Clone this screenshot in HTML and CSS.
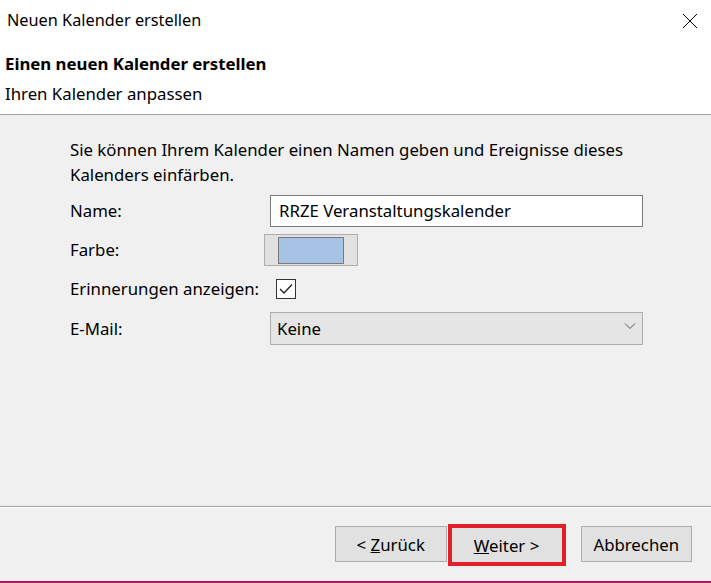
FILE: index.html
```html
<!DOCTYPE html>
<html lang="de">
<head>
<meta charset="utf-8">
<link rel="stylesheet" href="styles.css">
</head>
<body>
<div class="dialog">
  <div class="titlebar">
    <span class="title">Neuen Kalender erstellen</span>
    <svg class="close" width="16" height="16" viewBox="0 0 16 16"><path d="M1 1 L15 15 M15 1 L1 15" stroke="#000" stroke-width="1" fill="none"/></svg>
  </div>
  <div class="header">
    <div class="h-title">Einen neuen Kalender erstellen</div>
    <div class="h-sub">Ihren Kalender anpassen</div>
  </div>
  <div class="body">
    <p class="intro">Sie können Ihrem Kalender einen Namen geben und Ereignisse dieses Kalenders einfärben.</p>
    <div class="form">
      <label class="lbl">Name:</label>
      <div class="input">RRZE Veranstaltungskalender</div>
      <label class="lbl">Farbe:</label>
      <div class="colorbtn"><span class="swatch"></span></div>
      <label class="lbl">Erinnerungen anzeigen:</label>
      <div class="checkbox"><svg width="14" height="12" viewBox="0 0 14 12"><path d="M1 6 L5 10 L13 1.5" stroke="#222" stroke-width="1.3" fill="none"/></svg></div>
      <label class="lbl">E-Mail:</label>
      <div class="select"><span>Keine</span><svg width="12" height="8" viewBox="0 0 12 8"><path d="M1 1.5 L6 6.5 L11 1.5" stroke="#555" stroke-width="1" fill="none"/></svg></div>
    </div>
  </div>
  <div class="footer">
    <button class="btn">&lt; <u>Z</u>urück</button>
    <span class="highlight"><button class="btn"><u>W</u>eiter &gt;</button></span>
    <button class="btn cancel">Abbrechen</button>
  </div>
</div>
</body>
</html>
```
FILE: styles.css
```css
html, body { margin: 0; padding: 0; }
body {
  width: 711px;
  height: 583px;
  overflow: hidden;
  font-family: "Segoe UI", "Noto Sans", "Open Sans", sans-serif;
  font-size: 16.8px;
  color: #000;
  background: #f0f0f0;
}
.dialog {
  display: flex;
  flex-direction: column;
  height: 583px;
  box-sizing: border-box;
  border-bottom: 2px solid #b0175e;
}
.titlebar {
  background: #fff;
  height: 42px;
  display: flex;
  align-items: center;
  justify-content: space-between;
  padding: 0 13px 0 7px;
}
.title { font-size: 16.3px; position: relative; top: -1px; }
.close { display: block; }
.header {
  background: #fff;
  height: 73px;
  padding: 10px 5px 0;
  box-sizing: border-box;
  border-bottom: 1px solid #a0a0a0;
}
.h-title { font-weight: bold; line-height: 24px; }
.h-sub { line-height: 24px; margin-top: 6px; }
.body {
  flex: 1;
  padding: 22px 0 0 70px;
  box-sizing: border-box;
  border-bottom: 1px solid #a0a0a0;
  box-shadow: 0 1px 0 #fff;
}
.intro { margin: 0; line-height: 25px; width: 580px; }
.form {
  display: grid;
  grid-template-columns: 200px 373px;
  grid-template-rows: 32px 32px 32px 33px;
  row-gap: 7px;
  margin-top: 8px;
  align-items: center;
}
.lbl { line-height: 24px; }
.input {
  height: 32px;
  box-sizing: border-box;
  border: 1px solid #7a7a7a;
  background: #fff;
  padding: 0 8px;
  line-height: 30px;
  width: 373px;
}
.colorbtn {
  margin-left: -6px;
  width: 94px;
  height: 32px;
  box-sizing: border-box;
  background: #e1e1e1;
  border: 1px solid #adadad;
  display: flex;
  justify-content: center;
  align-items: center;
}
.swatch {
  width: 66px;
  height: 27px;
  box-sizing: border-box;
  background: #a6c2e4;
  border: 1px solid #7a7a7a;
}
.checkbox {
  margin-left: 6px;
  width: 20px;
  height: 20px;
  box-sizing: border-box;
  border: 1px solid #333;
  background: #fff;
  display: flex;
  align-items: center;
  justify-content: center;
}
.checkbox svg { display: block; }
.select {
  height: 33px;
  box-sizing: border-box;
  border: 1px solid #adadad;
  background: #e5e5e5;
  display: flex;
  align-items: center;
  justify-content: space-between;
  padding: 0 6px 0 6px;
  width: 373px;
}
.select svg { display: block; margin-top: -6px; }
.footer {
  height: 74px;
  box-sizing: border-box;
  display: flex;
  align-items: flex-start;
  padding: 19px 19px 0 335px;
}
.btn {
  font-family: inherit;
  font-size: 16.8px;
  width: 112px;
  height: 36px;
  background: #e1e1e1;
  border: 1px solid #adadad;
  color: #000;
  padding: 0;
  margin: 0;
}
.highlight {
  margin: -2px 0 0 1px;
  border: 4px solid #e2202a;
  display: flex;
}
.highlight .btn { width: 110px; height: 34px; border-color: #e1e1e1; }
.cancel { margin-left: 15px; }
```
